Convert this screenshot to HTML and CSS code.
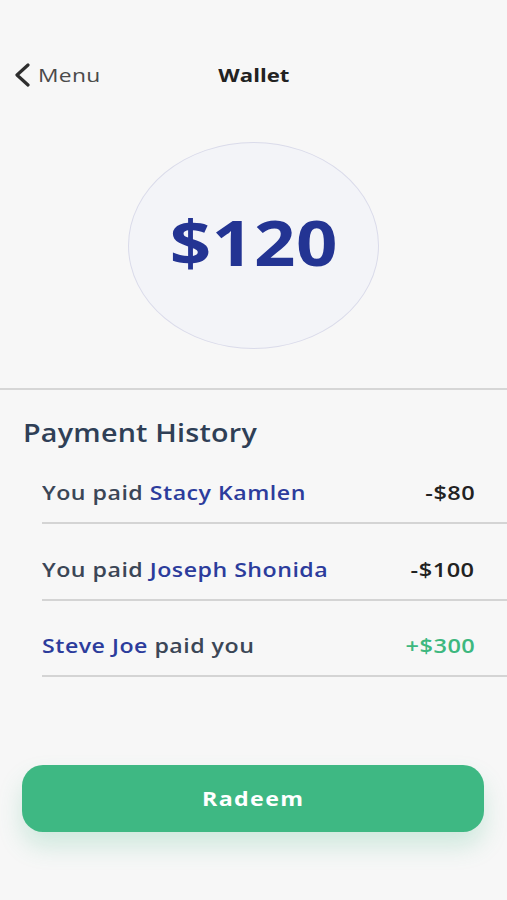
FILE: index.html
```html
<!DOCTYPE html>
<html>
<head>
<meta charset="utf-8">
<link rel="stylesheet" href="styles.css">
</head>
<body>
<div class="screen">
  <header class="topbar">
    <div class="back">
      <svg class="chev" width="18" height="24" viewBox="0 0 18 24"><path d="M15 2 L4 12 L15 22" fill="none" stroke="#2e2e2e" stroke-width="3.2" stroke-linecap="round" stroke-linejoin="round"/></svg>
      <span class="back-label">Menu</span>
    </div>
    <div class="title"><span class="title-text">Wallet</span></div>
  </header>
  <section class="balance-wrap">
    <div class="balance"><span class="balance-text">$120</span></div>
  </section>
  <hr class="divider">
  <section class="history">
    <h2 class="history-title"><span class="history-text">Payment History</span></h2>
    <ul class="rows">
      <li class="row"><span class="desc">You paid <b class="name">Stacy Kamlen</b></span><span class="amt">-$80</span></li>
      <li class="row"><span class="desc">You paid <b class="name">Joseph Shonida</b></span><span class="amt">-$100</span></li>
      <li class="row"><span class="desc"><b class="name">Steve Joe</b> paid you</span><span class="amt plus">+$300</span></li>
    </ul>
  </section>
  <div class="action">
    <button class="redeem"><span class="redeem-text">Radeem</span></button>
  </div>
</div>
</body>
</html>
```
FILE: styles.css
```css
* { box-sizing: border-box; }
html, body { margin: 0; padding: 0; }
body {
  background: #f7f7f7;
  font-family: "Open Sans", "Noto Sans", sans-serif;
  width: 507px;
  height: 900px;
  overflow: hidden;
}
.screen { display: flex; flex-direction: column; height: 900px; }
.topbar {
  position: relative;
  height: 52px;
  margin-top: 49px;
  display: flex;
  align-items: center;
}
.back { display: flex; align-items: center; padding-left: 13px; gap: 7px; }
.chev { display: block; }
.back-label {
  display: inline-block;
  font-size: 19px; color: #4a4a4a; letter-spacing: 0.3px;
  transform: scaleX(1.2); transform-origin: left center;
}
.title {
  position: absolute;
  left: 0; right: 0; top: 0; bottom: 0;
  display: flex; align-items: center; justify-content: center;
  pointer-events: none;
}
.title-text {
  display: inline-block;
  font-size: 18px; font-weight: 700; color: #222;
  transform: scaleX(1.23); transform-origin: center;
}
.balance-wrap { display: flex; justify-content: center; padding-top: 41px; }
.balance {
  width: 251px; height: 207px;
  border-radius: 50%;
  background: #f3f4f8;
  border: 1.5px solid #dadbea;
  display: flex; align-items: center; justify-content: center;
  padding-bottom: 8px;
}
.balance-text {
  display: inline-block;
  font-size: 62px; font-weight: 700; color: #233493;
  letter-spacing: 0.5px;
  transform: scaleX(1.17); transform-origin: center;
}
.divider {
  margin: 39px 0 0;
  border: 0;
  height: 2px;
  background: #d6d6d6;
}
.history { padding-top: 28px; }
.history-title {
  margin: 0 0 0 23px;
  line-height: 30px;
  font-weight: 600;
}
.history-text {
  display: inline-block;
  font-size: 24.5px; font-weight: 600; color: #2f3f56;
  letter-spacing: 0.2px;
  transform: scaleX(1.17); transform-origin: left center;
}
.rows { list-style: none; margin: 0 0 0 42px; padding: 0; }
.row {
  display: flex; justify-content: space-between; align-items: flex-start;
  height: 77px;
  padding: 32px 32px 0 0;
  line-height: 26px;
  border-bottom: 2px solid #d4d4d4;
  font-size: 19px; font-weight: 600; color: #3b4656;
  letter-spacing: 0.4px;
}
.row:first-child { height: 76px; padding-top: 32px; }
.row + .row { height: 77px; padding-top: 33px; }
.row:last-child { height: 76px; padding-top: 32px; }
.desc { display: inline-block; transform: scaleX(1.22); transform-origin: left center; }
.name { font-weight: 600; color: #2c3c9c; }
.amt { display: inline-block; color: #222; transform: scaleX(1.24); transform-origin: right center; }
.amt.plus { color: #3db87f; }
.action { margin-top: auto; padding: 0 23px 68px 22px; }
.redeem {
  display: flex; align-items: center; justify-content: center;
  width: 100%; height: 67px;
  border: 0; border-radius: 21px;
  background: #3eb883;
  color: #fff;
  font-family: inherit;
  box-shadow: 0 14px 24px rgba(62, 184, 131, 0.22);
}
.redeem-text {
  display: inline-block;
  font-size: 20px; font-weight: 700; letter-spacing: 1.2px;
  transform: scaleX(1.16); transform-origin: center;
}
```
